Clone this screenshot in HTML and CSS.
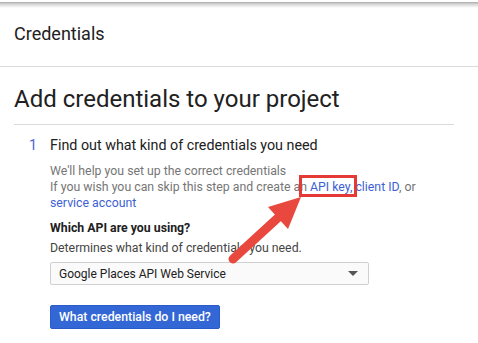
FILE: index.html
```html
<!DOCTYPE html>
<html lang="en">

<head>
    <meta charset="utf-8">
    <title>Credentials</title>
    <meta name="viewport" content="width=device-width, initial-scale=1">
    <link rel="stylesheet" href="styles.css">
</head>

<body>

    <div class="top-shadow"></div>

    <header class="page-header">Credentials</header>

    <main class="content">
        <h1>Add credentials to your project</h1>

        <section class="step">
            <div class="step-number">1</div>
            <div class="step-body">
                <h2>Find out what kind of credentials you need</h2>
                <p class="step-desc">
                    We'll help you set up the correct credentials<br>
                    If you wish you can skip this step and create a<span class="marked">n <a href="#">API key,</a></span>
                    <a href="#">client ID</a>, or<br>
                    <a href="#">service account</a>
                </p>

                <p class="field-label">Which API are you using?</p>
                <p class="field-hint">Determines what kind of credentials you need.</p>
                <div class="select">
                    <span>Google Places API Web Service</span>
                    <span class="caret"></span>
                </div>

                <button type="button">What credentials do I need?</button>
            </div>
        </section>
    </main>

    <!-- annotation arrow drawn over the page -->
    <svg class="annotation" width="478" height="343" viewBox="0 0 478 343">
        <line x1="233" y1="259" x2="281" y2="215" stroke="#e8483e" stroke-width="9" stroke-linecap="round" />
        <polygon points="301,197 268,207 288,229" fill="#e8483e" />
    </svg>

</body>

</html>
```

FILE: styles.css
```css
* {
    margin: 0;
    padding: 0;
    box-sizing: border-box;
}

body {
    position: relative;
    width: 478px;
    height: 343px;
    overflow: hidden;
    font-family: Roboto, "Liberation Sans", sans-serif;
    color: #212121;
    background-color: white;
}

/** Shadow of the bar above the page **/
.top-shadow {
    height: 8px;
    background: linear-gradient(#fff 0, #fff 2px, #a9a9a9 2px, #d4d4d4 4px, #fff 8px);
}

.page-header {
    height: 59px;
    padding: 16px 14px 0;
    font-size: 18px;
    line-height: 20px;
    border-bottom: 1px solid #dadada;
}

.content {
    padding: 0 24px 0 14px;
}

h1 {
    margin-top: 17px;
    padding-bottom: 10px;
    font-size: 24px;
    font-weight: 400;
    line-height: 30px;
    border-bottom: 1px solid #dadada;
}

/** Step **/
.step {
    display: flex;
    margin-top: 10px;
}

.step-number {
    width: 36px;
    padding-left: 15px;
    font-size: 14.3px;
    line-height: 20px;
    color: #4a67d3;
}

.step-body {
    flex: 1;
}

h2 {
    font-size: 14.3px;
    font-weight: 400;
    line-height: 20px;
}

.step-desc {
    margin-top: 8px;
    font-size: 12.3px;
    line-height: 16px;
    color: #757575;
}

a {
    color: #3d5fd4;
    text-decoration: none;
}

/** Red box around the API key link **/
.marked {
    position: relative;
}

.marked::after {
    content: "";
    position: absolute;
    top: -5px;
    bottom: -3px;
    left: -1px;
    right: -5px;
    border: 3px solid #e53935;
}

.field-label {
    margin-top: 9px;
    font-size: 12.3px;
    font-weight: 700;
    line-height: 16px;
}

.field-hint {
    margin-top: 4px;
    font-size: 12.3px;
    line-height: 16px;
    color: #444;
}

.select {
    display: flex;
    align-items: center;
    justify-content: space-between;
    width: 319px;
    height: 23px;
    margin-top: 6px;
    padding: 0 8px;
    font-size: 12px;
    background-color: #fafafa;
    border: 1px solid #d0d0d0;
    border-radius: 2px;
}

.caret {
    border-left: 5px solid transparent;
    border-right: 5px solid transparent;
    border-top: 5px solid #555;
    margin-right: 2px;
}

button {
    display: block;
    height: 24px;
    margin-top: 20px;
    padding: 0 8px;
    font-family: Roboto, "Liberation Sans", sans-serif;
    font-size: 12.3px;
    font-weight: 500;
    color: white;
    background-color: #3367d6;
    border: 1px solid #2a5bc9;
    border-radius: 2px;
}

.annotation {
    position: absolute;
    top: 0;
    left: 0;
    pointer-events: none;
}
```
